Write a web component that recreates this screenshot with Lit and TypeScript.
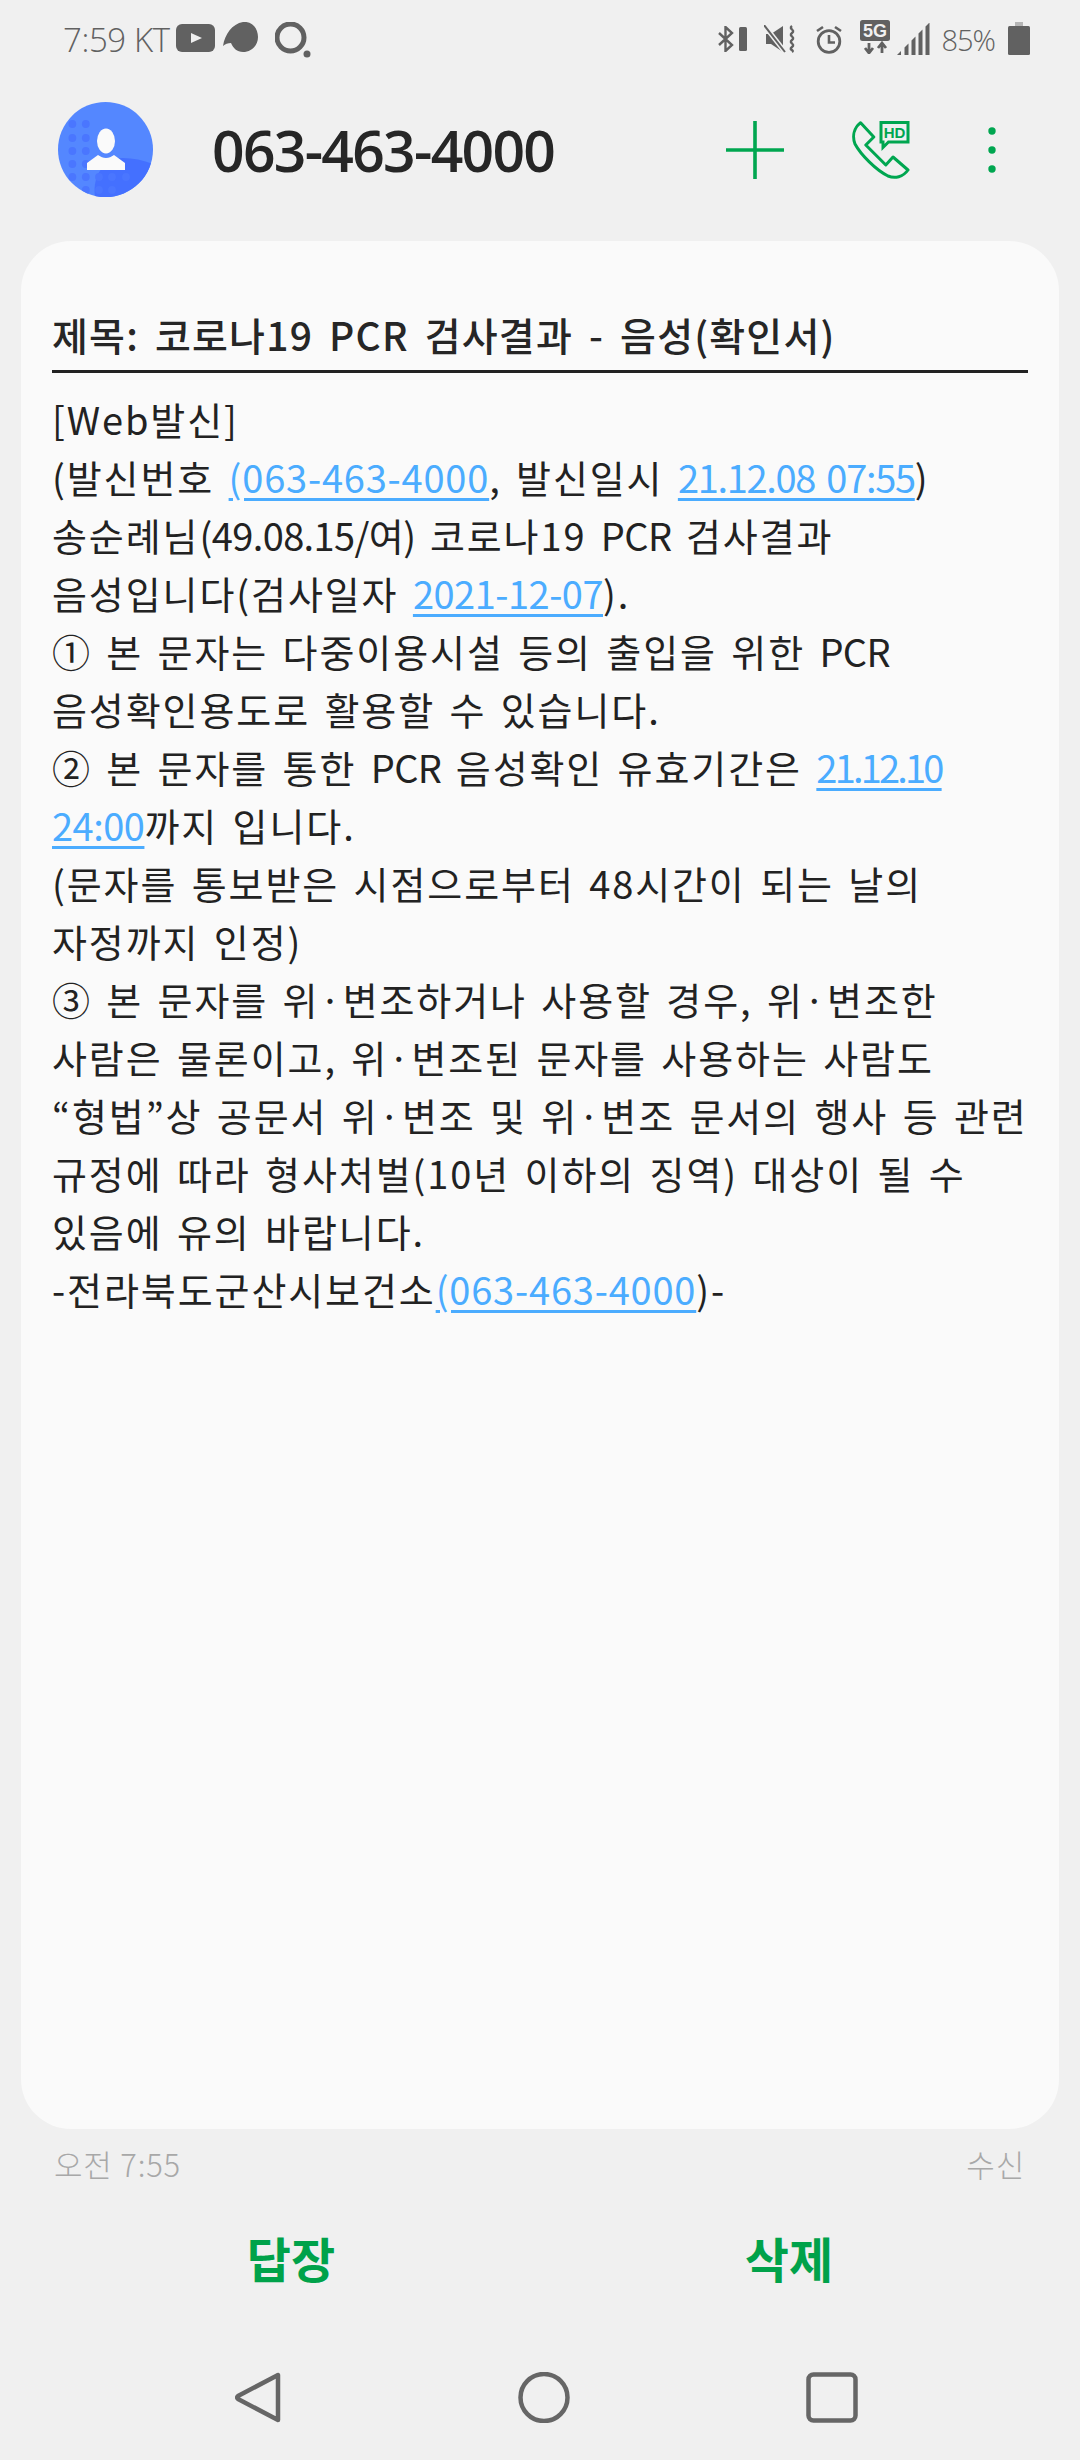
import { LitElement, html, svg, css } from "lit";
import { customElement } from "lit/decorators.js";

const dots: [number, number][] = [];
const xs = [14.4, 27.8, 41, 54, 68];
const ys = [22, 36, 49, 62, 75, 88];
ys.forEach((y, r) => xs.forEach((x, c) => {
  if (r < 4 ? c < 2 : r === 4 ? true : c > 0 && c < 4) dots.push([x, y]);
}));

@customElement("app-root")
export class AppRoot extends LitElement {
  static styles = css`
    :host { display: block; width: 1080px; height: 2460px; background: #f0f0f0; font-family: "Noto Sans CJK KR", "Noto Sans", sans-serif; color: #222; overflow: hidden; }
    * { box-sizing: border-box; }
    svg { display: block; flex: none; }
    .status { height: 80px; padding: 0 50px 2px 63px; display: flex; align-items: center; justify-content: space-between; color: #616161; }
    .group { display: flex; align-items: center; }
    .time { font-family: "Open Sans", sans-serif; font-size: 33px; font-weight: 300; letter-spacing: -0.4px; white-space: nowrap; }
    .batt { font-family: "Open Sans", sans-serif; font-size: 29px; font-weight: 300; letter-spacing: -1px; white-space: nowrap; margin-left: 11px; }
    .yt { margin-left: 6px; margin-top: -2px; }
    .bubble { margin-left: 8px; margin-top: -4px; }
    .ring { margin-left: 16px; margin-top: 4px; }
    .mute { margin-left: 16px; }
    .alarm { margin-left: 20px; }
    .five { margin-left: 18px; margin-top: -4px; }
    .sig { margin-left: 7px; margin-top: -1px; }
    .cell { margin-left: 13px; margin-top: -1px; }
    .header { height: 139px; padding: 0 0 0 58px; display: flex; align-items: center; }
    .num { margin-left: 59px; width: 514px; font-family: "Open Sans", sans-serif; font-size: 57px; font-weight: 600; letter-spacing: -1.7px; white-space: nowrap; color: #262626; }
    .call { margin-left: 68px; }
    .more { margin-left: 78px; }
    .card { margin: 22px 21px 0; height: 1888px; background: #fafafa; border-radius: 50px; padding: 65px 31px 0; }
    .title { height: 67px; padding: 2px 0 0; font-size: 39px; font-weight: 500; line-height: 52px; letter-spacing: 1.2px; word-spacing: 6px; border-bottom: 3px solid #222; white-space: nowrap; color: #262626; }
    .body { margin-top: 17px; font-size: 38px; font-weight: 400; line-height: 58px; letter-spacing: 1.9px; word-spacing: 4px; color: #222; }
    .line { white-space: nowrap; height: 58px; }
    .link { color: #4bacff; text-decoration: underline; text-underline-offset: 5px; letter-spacing: -0.5px; }
    .phone { letter-spacing: 0.8px; }
    .date { letter-spacing: -1.3px; }
    .short { letter-spacing: -2.8px; }
    .tight { letter-spacing: -0.6px; }
    .meta { height: 65px; padding: 16px 55px 0 54px; display: flex; justify-content: space-between; font-size: 31px; font-weight: 300; line-height: 38px; letter-spacing: 0.8px; color: #a8a8a8; }
    .actions { height: 125px; padding: 0 42px; display: flex; align-items: center; }
    .act { width: 50%; text-align: center; font-size: 48px; font-weight: 700; color: #00a24a; }
    .nav { height: 150px; display: flex; justify-content: center; }
    .nav-in { width: 623px; height: 51px; margin-top: 53px; margin-left: 13px; display: flex; justify-content: space-between; }
  `;

  render() {
    const L = (s: string, c = "") => html`<span class="link ${c}">${s}</span>`;
    const T = (s: string) => html`<span class="tight">${s}</span>`;
    return html`
      <div class="status">
        <div class="group">
          <span class="time">7:59 KT</span>
          <svg class="yt" width="39" height="28" viewBox="0 0 39 28"><rect width="39" height="28" rx="6" fill="#616161"/><path d="M15 9l11 5-11 5z" fill="#f0f0f0"/></svg>
          <svg class="bubble" width="36" height="31" viewBox="0 0 36 31"><path d="M0 24C2 12 9 2 20 0 29-1 35 6 35 15 35 24 28 30 20 30 14 30 10 26 8 21 5 21 2 22 0 24z" fill="#616161"/></svg>
          <svg class="ring" width="36" height="38" viewBox="0 0 36 38"><circle cx="15.500" cy="15.500" r="13.500" fill="none" stroke="#616161" stroke-width="5"/><circle cx="32" cy="32" r="3.500" fill="#616161"/></svg>
        </div>
        <div class="group">
          <svg width="30" height="26" viewBox="0 0 30 26"><path d="M1 7l13 12-6.500 6V1L14 7 1 19" fill="none" stroke="#616161" stroke-width="2.400"/><rect x="21" y="1" width="8" height="24" rx="1.500" fill="#616161"/></svg>
          <svg class="mute" width="32" height="28" viewBox="0 0 32 28"><path d="M2 9h5L19 1v26L7 19H2z" fill="#616161"/><path d="M0 0l21 27" stroke="#f0f0f0" stroke-width="5"/><path d="M0 0l21 27" stroke="#616161" stroke-width="2"/><path d="M28 1c-4 3 4 4 0 7s4 4 0 7 4 4 0 7 3 3 0 5" fill="none" stroke="#616161" stroke-width="2.400"/></svg>
          <svg class="alarm" width="26" height="29" viewBox="0 0 26 29"><circle cx="13" cy="16.500" r="10.800" fill="none" stroke="#616161" stroke-width="2.800"/><path d="M13 10v7.500h6" fill="none" stroke="#616161" stroke-width="2.600"/><path d="M1 6l6-4M25 6l-6-4" stroke="#616161" stroke-width="2.600"/></svg>
          <svg class="five" width="30" height="34" viewBox="0 0 30 34"><rect width="30" height="21" rx="2.500" fill="#616161"/><text x="15" y="17" text-anchor="middle" font-family="Liberation Sans" font-size="18" font-weight="700" fill="#f0f0f0">5G</text><path d="M9 23v8M5 28l4 5 4-5M22 33v-9M18 28l4-5 4 5" fill="none" stroke="#616161" stroke-width="2.800"/></svg>
          <svg class="sig" width="33" height="32" viewBox="0 0 33 32"><path d="M0 32l4-4v4zM7.500 32v-7.500l4-4V32zM14.500 32V17.500l4-4V32zM21.500 32V10.500l4-4V32zM28.500 32V3.500l4-4V32z" fill="#616161"/></svg>
          <span class="batt">85%</span>
          <svg class="cell" width="22" height="33" viewBox="0 0 22 33"><rect x="7" y="0" width="8" height="4" fill="#b5b5b5"/><rect y="4" width="22" height="29" rx="1.500" fill="#616161"/></svg>
        </div>
      </div>

      <div class="header">
        <svg width="95" height="95" viewBox="0 0 95 95">
          <defs><clipPath id="av"><circle cx="47.500" cy="47.500" r="47.500"/></clipPath></defs>
          <g clip-path="url(#av)">
            <rect width="95" height="95" fill="#5487ff"/>
            <path d="M37 95c-3-22 9-38 28-39 10 0 20 2 30 6v33z" fill="#4470ff"/>
            ${dots.map(([x, y]) => svg`<circle cx=${x} cy=${y} r="3.900" fill="#4a76ff"/>`)}
            <ellipse cx="48" cy="39" rx="9" ry="12.500" fill="#fafafa"/>
            <path d="M29 61l11-8c3 2 5 3 8 3s5-1 8-3l11 8v7H29z" fill="#fafafa"/>
          </g>
        </svg>
        <div class="num">063-463-4000</div>
        <svg width="58" height="58" viewBox="0 0 58 58"><path d="M29 0v58M0 29h58" stroke="#00a650" stroke-width="3.600"/></svg>
        <svg class="call" width="58" height="58" viewBox="0 0 58 58"><path d="M8.600 1.700L21.800 16l-8 8 20 20 7.200-8 15 13c-5 7-13 9-20 6C24 49 9 34 3 23 0 15 2 7 8.600 1.700z" fill="none" stroke="#00a650" stroke-width="3" stroke-linejoin="round"/><path d="M29 1.500h27v19.500H36.500L31 26.500V21h-2z" fill="none" stroke="#00a650" stroke-width="3"/><text x="42.500" y="17" text-anchor="middle" font-family="Liberation Sans" font-size="15" font-weight="700" fill="#00a650">HD</text></svg>
        <svg class="more" width="8" height="46" viewBox="0 0 8 46"><circle cx="4" cy="4" r="3.700" fill="#00a650"/><circle cx="4" cy="23" r="3.700" fill="#00a650"/><circle cx="4" cy="42" r="3.700" fill="#00a650"/></svg>
      </div>

      <div class="card">
        <div class="title">제목: 코로나19 PCR 검사결과 - 음성(확인서)</div>
        <div class="body">
          <div class="line">[Web발신]</div>
          <div class="line">(발신번호 ${L("(063-463-4000", "phone")}, 발신일시 ${L("21.12.08 07:55", "date")})</div>
          <div class="line">송순례님${T("(49.08.15/여)")} 코로나19 ${T("PCR")} 검사결과</div>
          <div class="line">음성입니다(검사일자 ${L("2021-12-07")}).</div>
          <div class="line">① 본 문자는 다중이용시설 등의 출입을 위한 ${T("PCR")}</div>
          <div class="line">음성확인용도로 활용할 수 있습니다.</div>
          <div class="line">② 본 문자를 통한 ${T("PCR")} 음성확인 유효기간은 ${L("21.12.10", "short")}</div>
          <div class="line">${L("24:00")}까지 입니다.</div>
          <div class="line">(문자를 통보받은 시점으로부터 48시간이 되는 날의</div>
          <div class="line">자정까지 인정)</div>
          <div class="line">③ 본 문자를 위·변조하거나 사용할 경우, 위·변조한</div>
          <div class="line">사람은 물론이고, 위·변조된 문자를 사용하는 사람도</div>
          <div class="line">“형법”상 공문서 위·변조 및 위·변조 문서의 행사 등 관련</div>
          <div class="line">규정에 따라 형사처벌(10년 이하의 징역) 대상이 될 수</div>
          <div class="line">있음에 유의 바랍니다.</div>
          <div class="line">-전라북도군산시보건소${L("(063-463-4000", "phone")})-</div>
        </div>
      </div>

      <div class="meta"><span>오전 7:55</span><span>수신</span></div>
      <div class="actions"><div class="act">답장</div><div class="act">삭제</div></div>
      <div class="nav"><div class="nav-in">
        <svg width="46" height="51" viewBox="0 0 46 51"><path d="M43 3v45L3 27c-1-1-1-2 0-3z" fill="none" stroke="#666" stroke-width="4.500" stroke-linejoin="round"/></svg>
        <svg width="52" height="51" viewBox="0 0 52 51"><circle cx="26" cy="25.500" r="23.500" fill="none" stroke="#666" stroke-width="4.500"/></svg>
        <svg width="52" height="51" viewBox="0 0 52 51"><rect x="2.500" y="2.500" width="47" height="46" rx="5" fill="none" stroke="#666" stroke-width="4.500"/></svg>
      </div></div>
    `;
  }
}
